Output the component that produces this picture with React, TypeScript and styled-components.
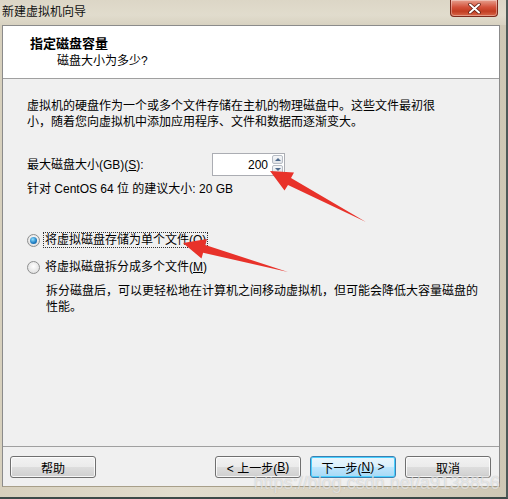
import styled, { createGlobalStyle } from 'styled-components';

const GlobalStyle = createGlobalStyle`
    html, body {
        margin: 0;
        padding: 0;
        background: #ffffff;
    }
    body {
        font-family: 'Liberation Sans', 'Noto Sans CJK SC', sans-serif;
        font-size: 12px;
        color: #000;
    }
`;

const FONT = `'Liberation Sans', 'Noto Sans CJK SC', sans-serif`;

const Window = styled.div`
    position: relative;
    width: 508px;
    height: 499px;
    box-sizing: border-box;
    display: flex;
    flex-direction: column;
    padding: 0 6px 10px 2px;
    background: linear-gradient(90deg, #d7d0bd 0%, #e2ddce 35%, #d9d3c2 70%, #cfc8b5 100%);
    border-right: 2px solid #4d5a58;
    border-bottom: 2px solid #3d4a48;
    overflow: hidden;
    font-family: ${FONT};
`;

const TitleBar = styled.div`
    height: 25px;
    display: flex;
    align-items: flex-start;
    justify-content: space-between;
    background: linear-gradient(180deg, #dcd6c6 0%, #e1dccd 60%, #d8d2c1 100%);
    margin: 0 -6px 0 -2px;
    padding: 0 8px 0 2px;
`;

const Title = styled.span`
    font-size: 12px;
    line-height: 24px;
    color: #111;
`;

const CloseButton = styled.div`
    width: 46px;
    height: 16px;
    border: 1px solid #7d2a1c;
    border-top: none;
    border-radius: 0 0 4px 4px;
    background: linear-gradient(180deg, #e7a08e 0%, #d3513a 45%, #c23d22 70%, #d8684a 100%);
    display: flex;
    align-items: center;
    justify-content: center;
    box-shadow: inset 0 0 0 1px rgba(255, 255, 255, 0.35);
`;

const Panel = styled.div`
    flex: 1;
    display: flex;
    flex-direction: column;
    background: #f0f0f0;
    border-left: 1px solid #8b8b8b;
    border-right: 1px solid #8b8b8b;
    border-bottom: 1px solid #a89f89;
`;

const Header = styled.div`
    height: 54px;
    box-sizing: border-box;
    background: #fff;
    border-top: 1px solid #8b8b8b;
    border-bottom: 1px solid #a0a0a0;
    padding: 9px 0 0 27px;
`;

const HeaderTitle = styled.div`
    font-size: 13px;
    font-weight: bold;
    line-height: 17px;
`;

const HeaderSub = styled.div`
    font-size: 12px;
    line-height: 18px;
    padding-left: 27px;
`;

const Main = styled.div`
    flex: 1;
    padding: 19px 24px 0 24px;
    display: flex;
    flex-direction: column;
`;

const Paragraph = styled.p<{ $indent?: number; $top?: number; $width?: number }>`
    margin: ${(p) => p.$top ?? 0}px 0 0 0;
    font-size: 12px;
    line-height: 16px;
    padding-left: ${(p) => p.$indent ?? 0}px;
    width: ${(p) => p.$width ?? 420}px;
`;

const SizeRow = styled.div`
    margin-top: 23px;
    display: flex;
    align-items: center;
    height: 23px;
`;

const SizeLabel = styled.span`
    width: 185px;
    line-height: 16px;
`;

const SpinBox = styled.div`
    width: 73px;
    height: 23px;
    box-sizing: border-box;
    border: 1px solid #abadb3;
    background: #fff;
    display: flex;
    align-items: center;
    padding: 1px;
`;

const SpinValue = styled.span`
    flex: 1;
    text-align: right;
    padding-right: 4px;
    font-size: 12px;
`;

const SpinButtons = styled.div`
    width: 11px;
    height: 100%;
    display: flex;
    flex-direction: column;
    gap: 1px;
`;

const SpinArrow = styled.div<{ $down?: boolean }>`
    flex: 1;
    border: 1px solid #b7bcc4;
    border-radius: 2px;
    background: linear-gradient(180deg, #f6f7f9, #dfe3e8);
    display: flex;
    align-items: center;
    justify-content: center;
    &::after {
        content: '';
        border-left: 3px solid transparent;
        border-right: 3px solid transparent;
        ${(p) => (p.$down ? 'border-top: 3px solid #4e6a8c;' : 'border-bottom: 3px solid #4e6a8c;')}
    }
`;

const Hint = styled.div`
    margin-top: 5px;
    line-height: 16px;
`;

const RadioRow = styled.div<{ $gap: number }>`
    margin-top: ${(p) => p.$gap}px;
    display: flex;
    align-items: center;
    height: 16px;
`;

const RadioCircle = styled.span<{ $checked?: boolean }>`
    width: 13px;
    height: 13px;
    box-sizing: border-box;
    border-radius: 50%;
    border: 1px solid #8e8f8f;
    background: radial-gradient(circle at 50% 40%, #ffffff, #d8d8d8);
    display: flex;
    align-items: center;
    justify-content: center;
    margin-right: 3px;
    &::after {
        content: '';
        display: ${(p) => (p.$checked ? 'block' : 'none')};
        width: 7px;
        height: 7px;
        border-radius: 50%;
        background: radial-gradient(circle at 40% 35%, #8ee0ff, #1c7ac0 60%, #0d4f8a);
    }
`;

const RadioLabel = styled.span<{ $focused?: boolean }>`
    line-height: 14px;
    padding: 0 1px;
    border: 1px dotted ${(p) => (p.$focused ? '#333' : 'transparent')};
`;

const Key = styled.span`
    text-decoration: underline;
`;

const Footer = styled.div`
    border-top: 1px solid #a0a0a0;
    height: 40px;
    box-sizing: border-box;
    display: flex;
    align-items: flex-start;
    padding: 9px 8px 0 7px;
    gap: 9px;
`;

const Spacer = styled.div`
    flex: 1;
`;

const Button = styled.div<{ $primary?: boolean }>`
    width: 86px;
    height: 22px;
    box-sizing: border-box;
    border: 1px solid ${(p) => (p.$primary ? '#3c7fb1' : '#707070')};
    border-radius: 3px;
    background: ${(p) =>
        p.$primary
            ? 'linear-gradient(180deg, #eaf6fd 0%, #d9f0fc 50%, #bee6fd 51%, #a7d9f5 100%)'
            : 'linear-gradient(180deg, #f2f2f2 0%, #ebebeb 50%, #dddddd 51%, #cfcfcf 100%)'};
    box-shadow: inset 0 0 0 1px ${(p) => (p.$primary ? '#48d0ff' : 'rgba(255,255,255,0.8)')};
    display: flex;
    align-items: center;
    justify-content: center;
    font-size: 12px;
`;

const Watermark = styled.div`
    position: absolute;
    right: 6px;
    bottom: 3px;
    font-family: 'Liberation Sans', sans-serif;
    font-size: 18px;
    color: rgba(255, 255, 255, 0.6);
    text-shadow: 0 0 1px rgba(110, 110, 110, 0.45);
    pointer-events: none;
`;

const Overlay = styled.svg`
    position: absolute;
    left: 0;
    top: 0;
    pointer-events: none;
`;

const arrows = [
    '270,171 294,172.5 291,178 366,222 288,185 284.5,190.5',
    '183,243 207,239 205.3,245 288,272 203.1,252.8 201.5,258.5',
];

export default function App() {
    return (
        <>
            <GlobalStyle />
            <Window>
                <TitleBar>
                    <Title>新建虚拟机向导</Title>
                    <CloseButton>
                        <svg width="13" height="11" viewBox="0 0 13 11">
                            <path d="M2 1.5 L11 9.5 M11 1.5 L2 9.5" stroke="#5a1b10" strokeWidth="3.4" strokeLinecap="round" />
                            <path d="M2 1.5 L11 9.5 M11 1.5 L2 9.5" stroke="#fff" strokeWidth="2" strokeLinecap="round" />
                        </svg>
                    </CloseButton>
                </TitleBar>
                <Panel>
                    <Header>
                        <HeaderTitle>指定磁盘容量</HeaderTitle>
                        <HeaderSub>磁盘大小为多少?</HeaderSub>
                    </Header>
                    <Main>
                        <Paragraph>
                            虚拟机的硬盘作为一个或多个文件存储在主机的物理磁盘中。这些文件最初很
                            小，随着您向虚拟机中添加应用程序、文件和数据而逐渐变大。
                        </Paragraph>
                        <SizeRow>
                            <SizeLabel>
                                最大磁盘大小(GB)(<Key>S</Key>):
                            </SizeLabel>
                            <SpinBox>
                                <SpinValue>200</SpinValue>
                                <SpinButtons>
                                    <SpinArrow />
                                    <SpinArrow $down />
                                </SpinButtons>
                            </SpinBox>
                        </SizeRow>
                        <Hint>针对 CentOS 64 位 的建议大小: 20 GB</Hint>
                        <RadioRow $gap={35}>
                            <RadioCircle $checked />
                            <RadioLabel $focused>
                                将虚拟磁盘存储为单个文件(<Key>O</Key>)
                            </RadioLabel>
                        </RadioRow>
                        <RadioRow $gap={11}>
                            <RadioCircle />
                            <RadioLabel>
                                将虚拟磁盘拆分成多个文件(<Key>M</Key>)
                            </RadioLabel>
                        </RadioRow>
                        <Paragraph $indent={19} $top={8} $width={440}>
                            拆分磁盘后，可以更轻松地在计算机之间移动虚拟机，但可能会降低大容量磁盘的
                            性能。
                        </Paragraph>
                    </Main>
                    <Footer>
                        <Button>帮助</Button>
                        <Spacer />
                        <Button>
                            &lt; 上一步(<Key>B</Key>)
                        </Button>
                        <Button $primary>
                            下一步(<Key>N</Key>) &gt;
                        </Button>
                        <Button>取消</Button>
                    </Footer>
                </Panel>
                <Watermark>https://blog.csdn.net/a9138856</Watermark>
                <Overlay width="508" height="499" viewBox="0 0 508 499">
                    {arrows.map((pts) => (
                        <polygon key={pts} points={pts} fill="#e8322a" />
                    ))}
                </Overlay>
            </Window>
        </>
    );
}
